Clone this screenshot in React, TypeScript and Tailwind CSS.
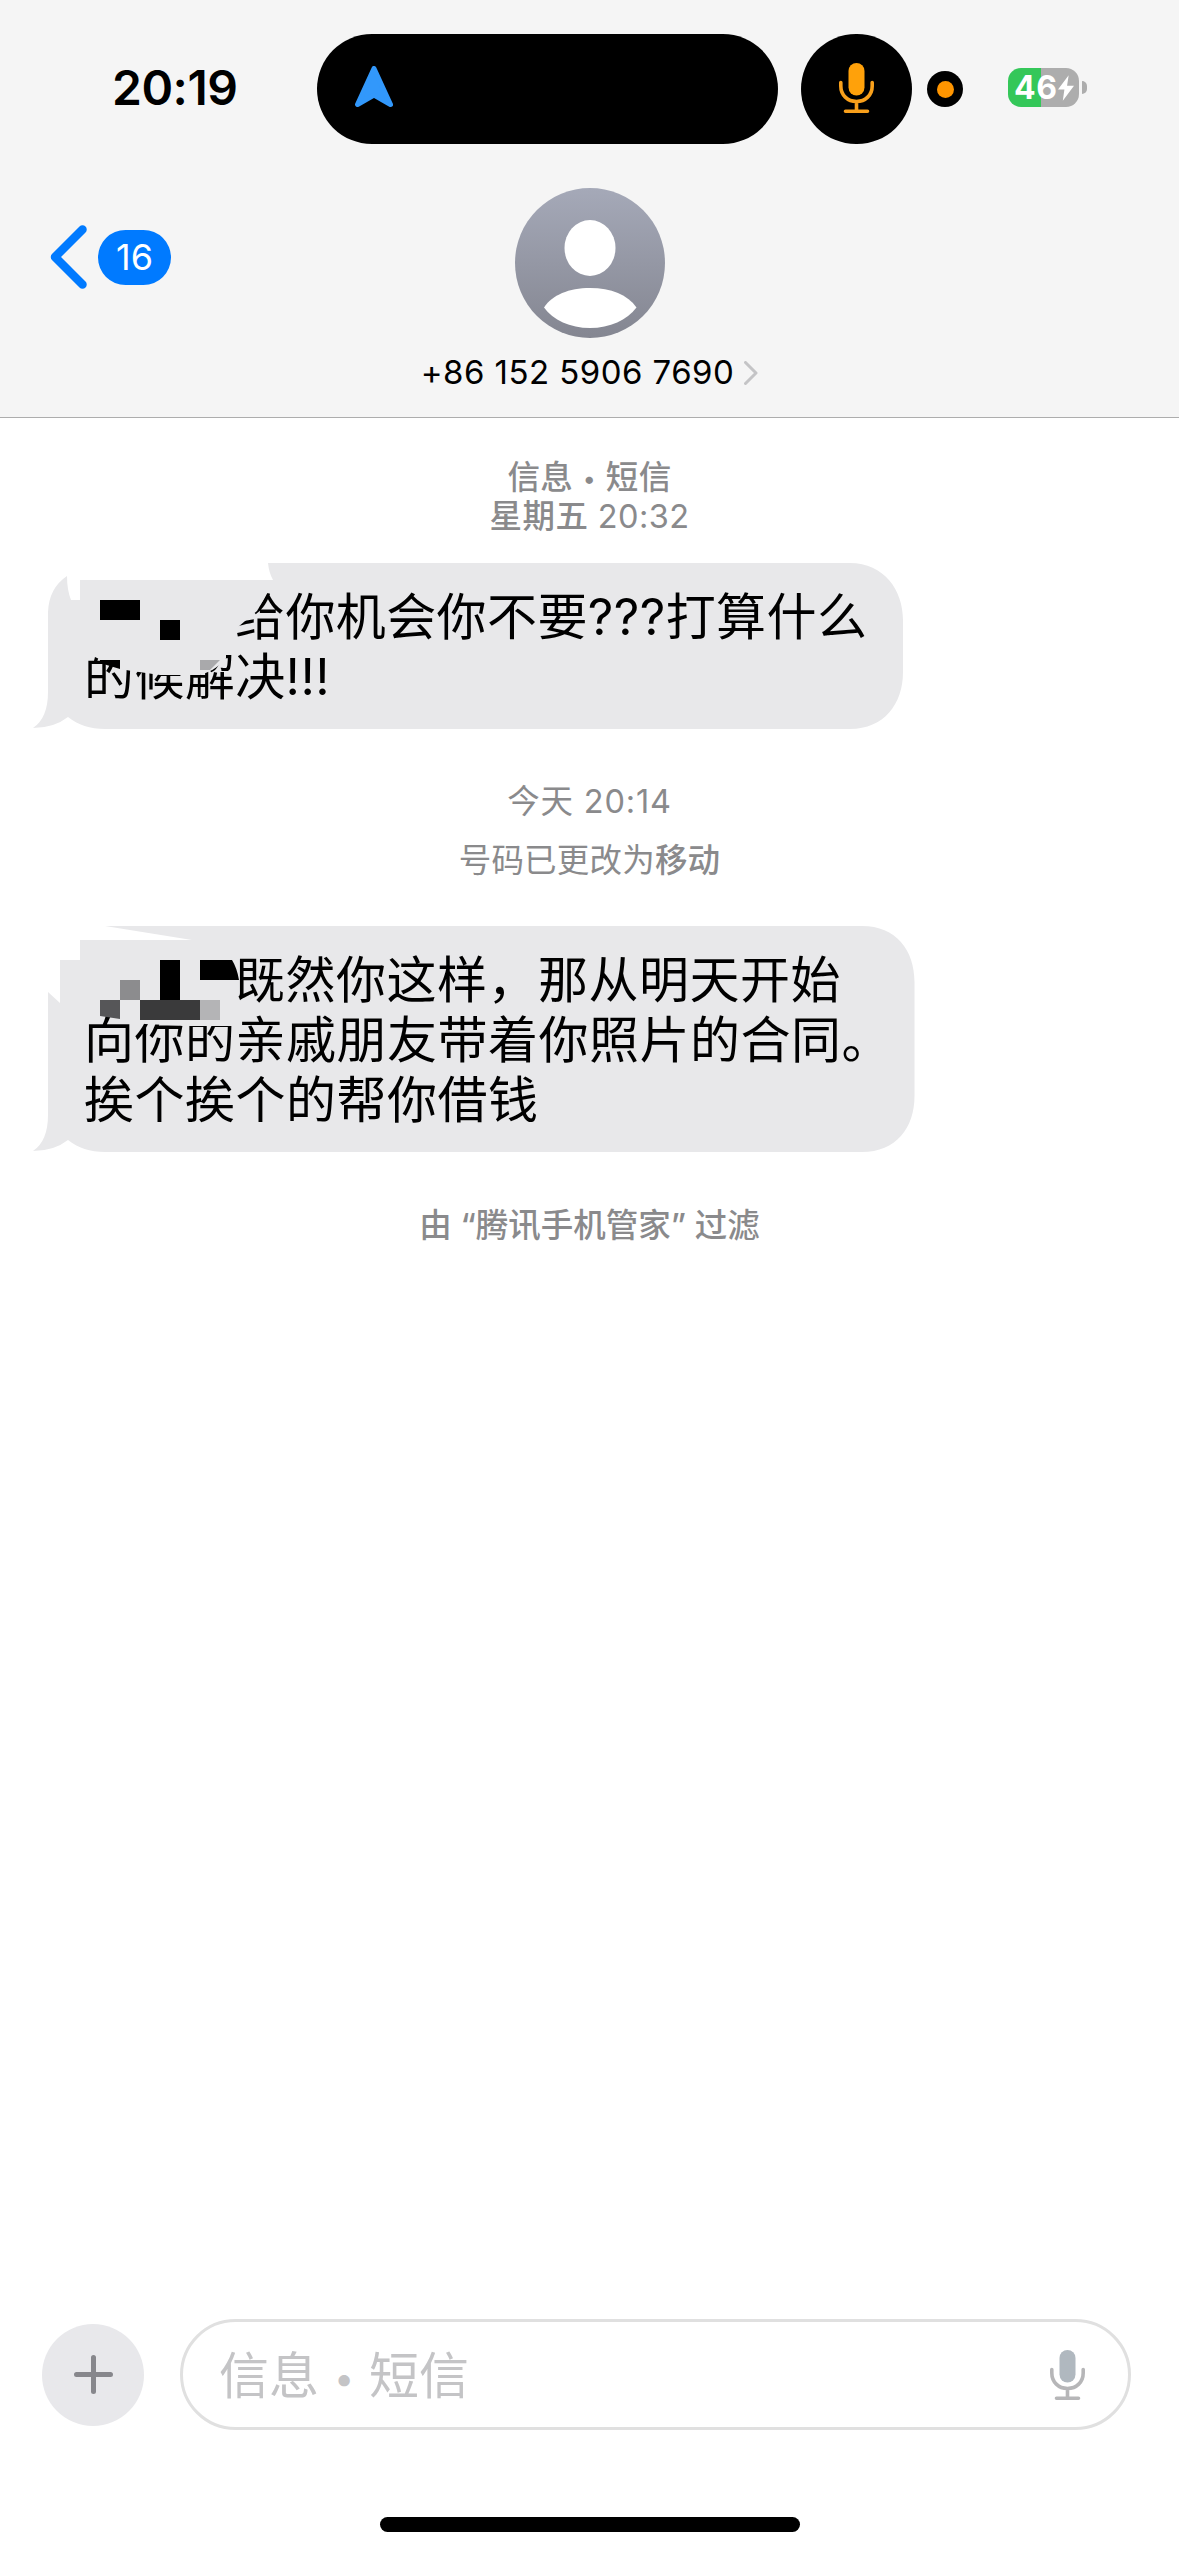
import type { ReactNode } from "react";

function MicIcon({ className, capsule, stand }: { className: string; capsule: string; stand: string }) {
  return (
    <svg viewBox="0 0 35 50" className={className} fill="none">
      <rect x="9.5" y="0" width="16" height="32.500" rx="8" fill={capsule} />
      <path
        d="M1.800 19.5v3.500c0 9 6.700 15.500 15.700 15.500S33.200 32 33.200 23v-3.500M17.500 39v8M6.500 48.200h22"
        stroke={stand}
        strokeWidth="3.600"
        strokeLinecap="round"
      />
    </svg>
  );
}

function StatusBar() {
  return (
    <div className="flex h-[144px] items-end">
      <div className="flex h-[110px] w-[317px] items-center pl-[112px] text-[48px] font-semibold leading-none tracking-[-0.5px]">
        <span className="-mt-[2px]">20:19</span>
      </div>
      <div className="flex h-[110px] w-[461px] items-center rounded-full bg-black pl-[38px]">
        <svg viewBox="0 0 38 42" className="-mt-[4px] h-[42px] w-[38px]">
          <path
            d="M19 2.500L35.500 38.500 19 29 2.500 38.500Z"
            fill="#3298fb"
            stroke="#3298fb"
            strokeWidth="5"
            strokeLinejoin="round"
          />
        </svg>
      </div>
      <div className="ml-[23px] flex h-[110px] w-[111px] items-center justify-center rounded-full bg-black">
        <MicIcon className="-mt-[2px] h-[50px] w-[35px]" capsule="#ffa10a" stand="#f9a01b" />
      </div>
      <div className="mb-[37px] ml-[15px] flex size-[36px] items-center justify-center rounded-full bg-black">
        <div className="size-[17px] rounded-full bg-[#ff9500]" />
      </div>
      <div className="mb-[37px] ml-[45px] flex items-center">
        <div className="flex h-[39px] w-[71px] items-center rounded-[13px] bg-[linear-gradient(to_right,#34c759_47%,#adadad_47%)] pl-[6px] text-white">
          <span className="text-[32px] font-bold leading-none tracking-[0.5px]">46</span>
          <svg viewBox="0 0 15 24" className="ml-[1px] h-[26px] w-[16px]">
            <path d="M10 0L0 13.500h6L4.500 24 15 9.800H8.500Z" fill="#fff" />
          </svg>
        </div>
        <div className="ml-[3px] h-[13px] w-[5px] rounded-r-full bg-[#adadad]" />
      </div>
    </div>
  );
}

function Avatar() {
  return (
    <svg viewBox="0 0 150 150" className="size-[150px]">
      <defs>
        <linearGradient id="avatar" x1="0" y1="0" x2="0" y2="1">
          <stop offset="0" stopColor="#a5a9b8" />
          <stop offset="1" stopColor="#848691" />
        </linearGradient>
      </defs>
      <circle cx="75" cy="75" r="75" fill="url(#avatar)" />
      <ellipse cx="75" cy="60" rx="25.500" ry="28" fill="#fff" />
      <path d="M29 119.500C37 107 54 100 75 100s38 7 46.500 19.500C112 132 95 140 75 140S38 132 29 119.500Z" fill="#fff" />
    </svg>
  );
}

function Header() {
  return (
    <header className="h-[418px] border-b border-[#adadad] bg-[#f5f5f5]">
      <StatusBar />
      <div className="grid grid-cols-[1fr_auto_1fr] pt-[44px]">
        <div className="flex h-[138px] items-center pl-[50px]">
          <svg viewBox="0 0 37 64" className="h-[64px] w-[37px]" fill="none">
            <path d="M32.500 4.500L5 32l27.500 27.500" stroke="#007aff" strokeWidth="8.500" strokeLinecap="round" strokeLinejoin="round" />
          </svg>
          <span className="ml-[11px] flex h-[55px] w-[73px] items-center justify-center rounded-full bg-[#007aff] text-[36px] leading-none text-white">
            16
          </span>
        </div>
        <div className="flex flex-col items-center">
          <Avatar />
          <div className="mt-[15px] flex items-center">
            <span className="text-[33px] leading-[38px] tracking-[0.450px]">+86 152 5906 7690</span>
            <svg viewBox="0 0 14 24" className="ml-[10px] mt-[2px] h-[24px] w-[14px]" fill="none">
              <path d="M1.500 1.500L12 12 1.500 22.500" stroke="#c4c4c6" strokeWidth="3" strokeLinecap="round" strokeLinejoin="round" />
            </svg>
          </div>
        </div>
        <div />
      </div>
    </header>
  );
}

function Dot() {
  return (
    <span className="inline-block w-[1em] text-center leading-none">
      <span className="align-[0.090em] text-[0.720em] leading-none">•</span>
    </span>
  );
}

function Label({ children, className }: { children: ReactNode; className: string }) {
  return (
    <div className={`text-center text-[32.500px] leading-[39px] text-[#8a8a8c] ${className}`}>
      {children}
    </div>
  );
}

const BUBBLE = "#e8e8ea";

export default function App() {
  return (
    <div
      className="flex h-[2556px] w-[1179px] flex-col overflow-hidden bg-white text-black"
      style={{ fontFamily: 'Inter, "Noto Sans CJK SC", sans-serif' }}
    >
      <Header />

      <main className="flex-1">
        <Label className="mt-[40px] tracking-[0.400px]">
          <div className="h-[39px] font-medium">
            信息
            <Dot />
            短信
          </div>
          <div className="h-[39px]">
            <span className="font-medium">星期五</span> 20:32
          </div>
        </Label>

        <section className="relative mt-[27px] h-[166px]">
          <svg viewBox="0 563 1179 166" className="absolute inset-0 h-full w-full">
            <path
              d="M268 563H850C884 563 903 590 903 620V672C903 704 884 729 850 729H105C90 729 78 725 68 717Q54 728 33 728Q48 718 48 692V612Q49 588 67 576Q67 590 71 600H80V580H273Q269 573 268 563Z"
              fill={BUBBLE}
            />
          </svg>
          <p className="relative whitespace-nowrap pl-[84px] pt-[24px] text-[50px] leading-[60px] tracking-[0.400px]">
            <span className="inline-block w-[151px]" />
            给你机会你不要<span>???</span>打算什么
            <br />
            的候解决!!!
          </p>
          <svg viewBox="0 563 1179 166" className="absolute inset-0 h-full w-full">
            <path d="M228 585H268V592L257 611 238 627H228Z" fill={BUBBLE} />
            <path d="M95 645H226V658C221 664 214 671 200 675L160 675 132 671 120 669 95 657Z" fill={BUBBLE} />
            <path d="M100 600h40v20h-40zM160 620h20v20h-20zM100 660h20v9l-20-6z" fill="#000" />
            <path d="M200 660h20l-10 10h-10z" fill="#a9a9ab" />
          </svg>
        </section>

        <Label className="mt-[53px] tracking-[0.800px]">今天 20:14</Label>
        <Label className="mt-[20px] tracking-[0.200px]">
          号码已更改为<span className="font-medium">移动</span>
        </Label>

        <section className="relative mt-[46px] h-[226px]">
          <svg viewBox="0 926 1179 226" className="absolute inset-0 h-full w-full">
            <path
              d="M105 926H862C896 926 914.500 950 914.500 982V1096C914.500 1128 896 1152 862 1152H105C90 1152 78 1148 68 1140Q54 1151 33 1151Q48 1141 48 1115V992L60 1003V960H80V940H192Z"
              fill={BUBBLE}
            />
          </svg>
          <p className="relative whitespace-nowrap pl-[84px] pt-[24px] text-[50px] leading-[60px] tracking-[0.500px]">
            <span className="inline-block w-[151px]" />
            既然你这样，那从明天开始
            <br />
            向你的亲戚朋友带着你照片的合同。
            <br />
            挨个挨个的帮你借钱
          </p>
          <svg viewBox="0 926 1179 226" className="absolute inset-0 h-full w-full">
            <path d="M120 1008H234V1026L190 1026 145 1024 120 1019Z" fill={BUBBLE} />
            <path d="M120 980h20v20h-20z" fill="#8c8c8e" />
            <path d="M160 960h20v40h-20zM200 960h32q5 8 7 20h-39z" fill="#000" />
            <path d="M100 1000h20v19l-20-3z" fill="#565658" />
            <path d="M140 1000h60v20h-60z" fill="#3a3a3b" />
            <path d="M200 1000h20v20h-20z" fill="#b4b4b6" />
          </svg>
        </section>

        <Label className="mt-[54px] font-medium">由 “腾讯手机管家” 过滤</Label>
      </main>

      <footer className="h-[237px]">
        <div className="flex h-[111px] items-center pl-[42px]">
          <div className="flex size-[102px] items-center justify-center rounded-full bg-[#e8e8eb]">
            <svg viewBox="0 0 39 39" className="size-[39px]">
              <path d="M19.500 2.500v34M2.500 19.500h34" stroke="#87878c" strokeWidth="5" strokeLinecap="round" />
            </svg>
          </div>
          <div className="ml-[36px] flex h-[111px] w-[951px] items-center justify-between rounded-full border-[3px] border-[#e0e0e0] pl-[36px] pr-[43px]">
            <span className="mt-[2px] text-[50px] leading-none text-[#c4c4c6]">
              信息
              <Dot />
              短信
            </span>
            <MicIcon className="h-[50px] w-[35px]" capsule="#b0b8bf" stand="#b6b6b8" />
          </div>
        </div>
        <div className="mx-auto mt-[87px] h-[15px] w-[420px] rounded-full bg-black" />
      </footer>
    </div>
  );
}
